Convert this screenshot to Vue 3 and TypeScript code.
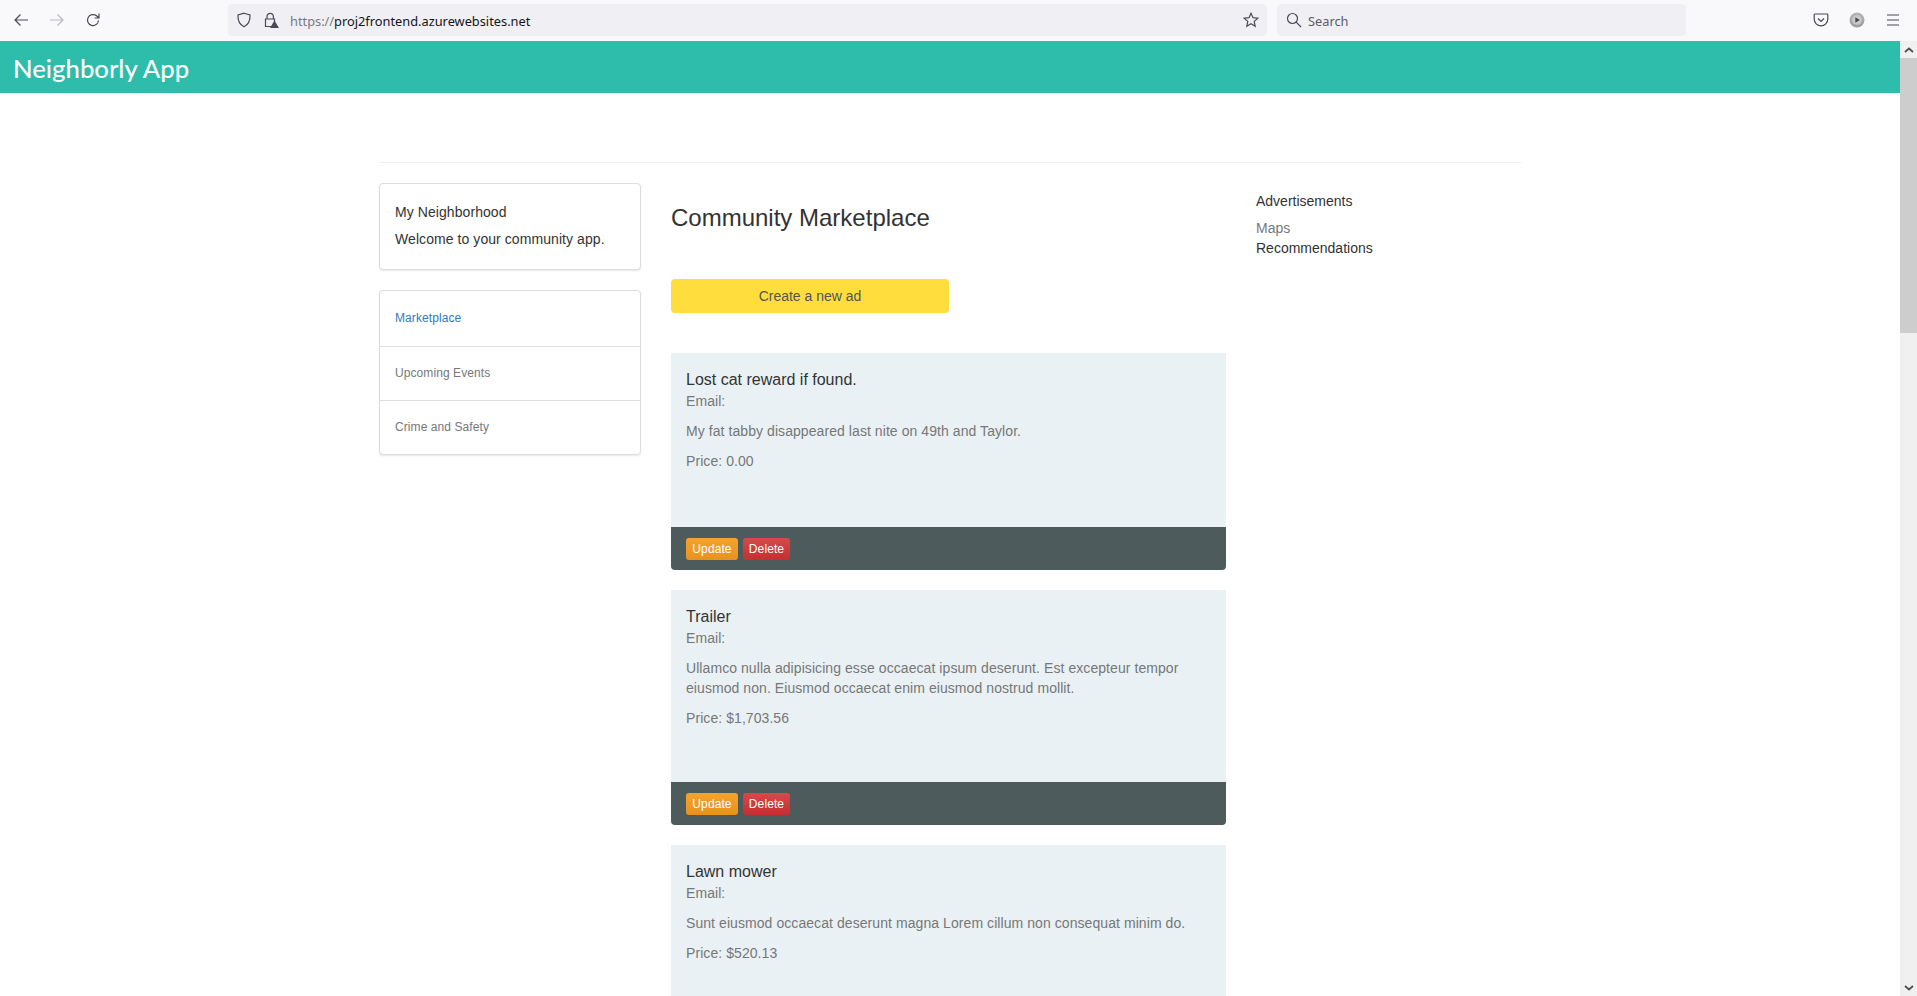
<template>
  <div class="window">
    <header class="toolbar">
      <div class="nav-buttons">
        <svg class="ico" viewBox="0 0 16 16"><path d="M15 8H2M7.5 2.500 2 8l5.500 5.500" /></svg>
        <svg class="ico off" viewBox="0 0 16 16"><path d="M1 8h13M8.500 2.500 14 8l-5.500 5.500" /></svg>
        <svg class="ico" viewBox="0 0 16 16"><path d="M13.500 8.500A5.500 5.500 0 1 1 11.500 3.800L14 6M14 1.500V6H9.500" /></svg>
      </div>
      <div class="urlbar">
        <svg class="ico shield" viewBox="0 0 16 16"><path d="M8 1.200 14 3c.3 5.500-1.500 9.500-6 11.800C3.500 12.500 1.700 8.500 2 3z" /></svg>
        <svg class="ico lock" viewBox="0 0 16 16">
          <path d="M4 7V4.500a3.200 3.200 0 0 1 6.400 0V7M2.500 7h9v7.500h-9z" />
          <path class="warn" d="M11.500 8.500 16 16H7z" />
        </svg>
        <span class="url"><span class="scheme">https://</span>proj2frontend.azurewebsites.net</span>
        <svg class="ico star" viewBox="0 0 16 16"><path d="m8 1.300 2 4.400 4.800.5-3.600 3.200 1 4.800L8 11.800l-4.200 2.400 1-4.800L1.200 6.200 6 5.700z" /></svg>
      </div>
      <div class="searchbar">
        <svg class="ico" viewBox="0 0 16 16"><circle cx="6.500" cy="6.500" r="5" /><path d="m10.200 10.200 4.800 4.800" /></svg>
        <span>Search</span>
      </div>
      <div class="tool-icons">
        <svg class="ico" viewBox="0 0 16 16"><path d="M2 2h12a.8.8 0 0 1 .8.8V7a6.800 6.800 0 0 1-13.600 0V2.800A.8.8 0 0 1 2 2z" /><path d="M5 6.500 8 9.500l3-3" /></svg>
        <svg class="addon" viewBox="0 0 16 16">
          <defs>
            <linearGradient id="addon-fill" x1="0" y1="0" x2="0" y2="1">
              <stop offset="0" stop-color="#b5b5b8" />
              <stop offset="1" stop-color="#9c9c9f" />
            </linearGradient>
          </defs>
          <circle cx="8" cy="8" r="7.500" fill="url(#addon-fill)" />
          <circle cx="8" cy="8" r="4.800" fill="#c9c9cc" />
          <path d="M6.300 5.200 10.800 8l-4.500 2.800z" />
        </svg>
        <svg class="ico" viewBox="0 0 16 16"><path d="M2 3h12M2 8h12M2 13h12" /></svg>
      </div>
    </header>

    <div class="viewport">
      <div class="page">
        <div class="brand-bar">Neighborly App</div>
        <div class="container">
          <div class="columns">
            <aside class="left-col">
              <div class="panel intro">
                <p>My Neighborhood</p>
                <p>Welcome to your community app.</p>
              </div>
              <nav class="panel side-nav">
                <a
                  v-for="link in links"
                  :key="link.label"
                  class="side-link"
                  :class="{ active: link.active }"
                >{{ link.label }}</a>
              </nav>
            </aside>

            <main class="main-col">
              <h1>Community Marketplace</h1>
              <button class="create-btn">Create a new ad</button>
              <article v-for="ad in ads" :key="ad.title" class="ad">
                <div class="ad-body" :class="{ tall: ad.tall }">
                  <h2>{{ ad.title }}</h2>
                  <div class="email">Email:</div>
                  <p>{{ ad.text }}</p>
                  <p>Price: {{ ad.price }}</p>
                </div>
                <div class="ad-footer">
                  <button class="small-btn update">Update</button>
                  <button class="small-btn delete">Delete</button>
                </div>
              </article>
            </main>

            <aside class="right-col">
              <div class="ads-title">Advertisements</div>
              <div class="ads-link muted">Maps</div>
              <div class="ads-link">Recommendations</div>
            </aside>
          </div>
        </div>
      </div>

      <div class="scrollbar">
        <div class="scroll-btn"><svg viewBox="0 0 10 6"><path d="M1 5 5 1.500 9 5" /></svg></div>
        <div class="scroll-thumb"></div>
        <div class="scroll-track"></div>
        <div class="scroll-btn"><svg viewBox="0 0 10 6"><path d="M1 1 5 4.500 9 1" /></svg></div>
      </div>
    </div>
  </div>
</template>

<script setup lang="ts">
interface SideLink {
  label: string
  active?: boolean
}

interface Ad {
  title: string
  text: string
  price: string
  tall?: boolean
}

const links: SideLink[] = [
  { label: 'Marketplace', active: true },
  { label: 'Upcoming Events' },
  { label: 'Crime and Safety' }
]

const ads: Ad[] = [
  {
    title: 'Lost cat reward if found.',
    text: 'My fat tabby disappeared last nite on 49th and Taylor.',
    price: '0.00'
  },
  {
    title: 'Trailer',
    text: 'Ullamco nulla adipisicing esse occaecat ipsum deserunt. Est excepteur tempor eiusmod non. Eiusmod occaecat enim eiusmod nostrud mollit.',
    price: '$1,703.56',
    tall: true
  },
  {
    title: 'Lawn mower',
    text: 'Sunt eiusmod occaecat deserunt magna Lorem cillum non consequat minim do.',
    price: '$520.13'
  }
]
</script>

<style>
html,
body {
  margin: 0;
  overflow: hidden;
}
</style>

<style scoped>
.window {
  width: 1917px;
  height: 996px;
  display: flex;
  flex-direction: column;
  overflow: hidden;
  background: #fff;
  font-family: "Liberation Sans", Arial, sans-serif;
  color: #333;
}

/* browser chrome */
.toolbar {
  height: 41px;
  flex: none;
  display: flex;
  align-items: center;
  background: #f9f9fb;
  box-sizing: border-box;
  padding-bottom: 1px;
}

.ico {
  width: 16px;
  height: 16px;
  fill: none;
  stroke: #4a4a55;
  stroke-width: 1.2;
  flex: none;
}

.ico.off {
  stroke: #b8b8bf;
}

.nav-buttons {
  width: 228px;
  flex: none;
  display: flex;
  gap: 20px;
  padding-left: 13px;
  box-sizing: border-box;
}

.urlbar,
.searchbar {
  height: 32px;
  display: flex;
  align-items: center;
  background: #f0f0f4;
  border-radius: 4px;
  font-family: "Noto Sans", "Open Sans", sans-serif;
  font-size: 12.8px;
  color: #15141a;
}

.urlbar {
  width: 1039px;
  flex: none;
  padding: 0 8px;
  box-sizing: border-box;
}

.shield,
.lock {
  margin-right: 11px;
}

.warn {
  fill: #4a4a55;
  stroke: none;
}

.url {
  flex: 1;
  padding-top: 1px;
}

.scheme {
  color: #7a7a82;
}

.searchbar {
  width: 409px;
  flex: none;
  margin-left: 10px;
  padding-left: 9px;
  gap: 6px;
  box-sizing: border-box;
  color: #5b5b66;
}

.searchbar span {
  padding-top: 1px;
}

.tool-icons {
  display: flex;
  align-items: center;
  gap: 20px;
  margin-left: 127px;
}

.addon {
  width: 16px;
  height: 16px;
  flex: none;
}

.addon path {
  fill: #47474c;
}

/* page area */
.viewport {
  flex: 1;
  min-height: 0;
  display: flex;
}

.page {
  flex: 1;
  min-width: 0;
  overflow: hidden;
}

.brand-bar {
  height: 52px;
  line-height: 54px;
  padding-left: 13px;
  background: #2ebdab;
  color: #fff;
  font-family: "Lato", "Open Sans", sans-serif;
  font-size: 25.7px;
  font-weight: 500;
}

.container {
  width: 1142px;
  margin-left: 379px;
  padding-top: 69px;
}

.columns {
  border-top: 1px solid #eee;
  padding-top: 20px;
  display: flex;
}

.left-col {
  width: 262px;
  flex: none;
}

.panel {
  background: #fff;
  border: 1px solid #ddd;
  border-radius: 4px;
  box-shadow: 0 1px 2px rgba(0, 0, 0, 0.1);
  box-sizing: border-box;
}

.intro {
  height: 87px;
  padding: 20px 15px 0;
  margin-bottom: 20px;
  font-size: 14px;
  letter-spacing: 0.07px;
  color: #333;
}

.intro p {
  margin: 0 0 10px;
  line-height: 17px;
}

.side-nav {
  display: flex;
  flex-direction: column;
}

.side-link {
  height: 54px;
  line-height: 53px;
  box-sizing: border-box;
  padding-left: 15px;
  font-size: 12px;
  letter-spacing: 0.08px;
  color: #777;
  border-top: 1px solid #ddd;
}

.side-link:first-child {
  height: 55px;
  line-height: 54px;
  border-top: 0;
}

.side-link.active {
  color: #337ab7;
}

.main-col {
  width: 555px;
  flex: none;
  margin-left: 30px;
}

h1 {
  margin: 21px 0 0;
  font-size: 24px;
  font-weight: 400;
  line-height: 28px;
  color: #333;
}

.create-btn {
  display: block;
  width: 278px;
  height: 34px;
  margin: 47px 0 40px;
  border: 0;
  border-radius: 4px;
  background: #ffdd3c;
  color: #555;
  font-family: inherit;
  font-size: 14px;
}

.ad {
  margin-bottom: 20px;
  border-radius: 0 0 4px 4px;
  overflow: hidden;
}

.ad-body {
  height: 174px;
  box-sizing: border-box;
  padding: 16px 15px 0;
  background: #e9f1f5;
  color: #777;
  font-size: 14px;
  letter-spacing: 0.07px;
}

.ad-body.tall {
  height: 192px;
}

h2 {
  margin: 0;
  font-size: 16px;
  font-weight: 400;
  line-height: 22px;
  letter-spacing: 0;
  color: #333;
}

.email {
  line-height: 20px;
}

.ad-body p {
  margin: 10px 0 0;
  line-height: 20px;
}

.ad-footer {
  height: 43px;
  box-sizing: border-box;
  padding-left: 15px;
  display: flex;
  align-items: center;
  gap: 5px;
  background: #4d5b5c;
}

.small-btn {
  height: 22px;
  padding: 0;
  border: 0;
  border-radius: 3px;
  color: #fff;
  font-family: inherit;
  font-size: 12px;
  letter-spacing: 0.1px;
}

.update {
  width: 52px;
  background: linear-gradient(#f2a330, #e8921e);
}

.delete {
  width: 47px;
  background: linear-gradient(#d9484c, #c42f2f);
}

.right-col {
  margin-left: 30px;
  padding-top: 8px;
  font-size: 14px;
}

.ads-title {
  line-height: 20px;
  color: #333;
  margin-bottom: 7px;
}

.ads-link {
  line-height: 20px;
  color: #333;
}

.ads-link.muted {
  color: #777;
}

/* scrollbar */
.scrollbar {
  width: 17px;
  flex: none;
  display: flex;
  flex-direction: column;
  background: #f0f0f0;
}

.scroll-btn {
  height: 17px;
  display: flex;
  align-items: center;
  justify-content: center;
}

.scroll-btn svg {
  width: 10px;
  height: 6px;
  fill: none;
  stroke: #505050;
  stroke-width: 1.8;
}

.scroll-thumb {
  height: 275px;
  background: #cdcdcd;
}

.scroll-track {
  flex: 1;
}
</style>
